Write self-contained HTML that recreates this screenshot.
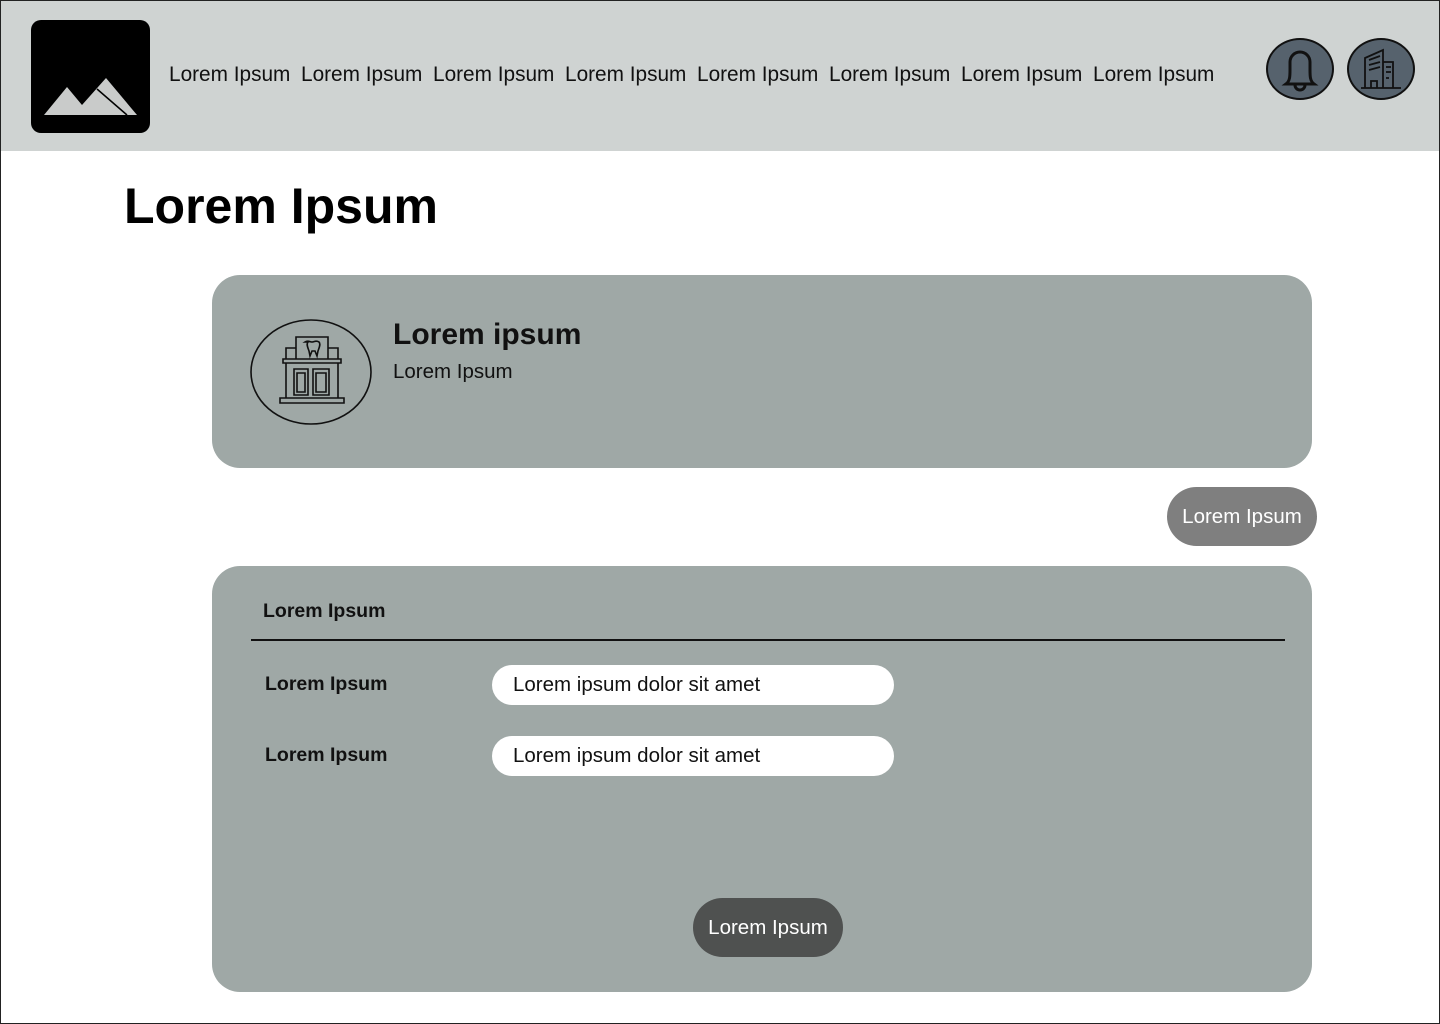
<!DOCTYPE html>
<html><head><style>
*{margin:0;padding:0;box-sizing:border-box}
body{width:1440px;height:1024px;position:relative;background:#fff;font-family:"Liberation Sans",sans-serif;overflow:hidden}
.frame{position:absolute;left:0;top:0;width:1440px;height:1024px;border:1px solid #222;z-index:10;pointer-events:none}
.hdr{position:absolute;left:0;top:0;width:1440px;height:151px;background:#cfd3d2}
.abs{position:absolute}
.nav{position:absolute;top:63px;left:169px;font-size:20.8px;color:#111;white-space:nowrap}
.nav span{display:inline-block;width:132px}
.circ{position:absolute;width:68px;height:62px;border-radius:50%;background:#56626d;border:2px solid #111}
.card{position:absolute;background:#9fa8a6;border-radius:28px}
.pill{position:absolute;background:#fff;border-radius:20px;font-size:20.5px;color:#111;padding-left:21px;line-height:40px;width:402px;height:40px}
.lbl{position:absolute;font-size:19.5px;font-weight:bold;color:#111}
</style></head><body>
<div class="hdr"></div>
<div class="abs" style="left:31px;top:20px;width:119px;height:113px;background:#000;border-radius:10px"></div>
<svg class="abs" style="left:31px;top:20px" width="119" height="113"><polygon points="13,95 36,67 51,85 75,58 106,95" fill="#c9cbca"/><line x1="66" y1="69" x2="96" y2="95" stroke="#000" stroke-width="1.5"/></svg>
<div class="nav"><span>Lorem Ipsum</span><span>Lorem Ipsum</span><span>Lorem Ipsum</span><span>Lorem Ipsum</span><span>Lorem Ipsum</span><span>Lorem Ipsum</span><span>Lorem Ipsum</span><span>Lorem Ipsum</span></div>
<div class="circ" style="left:1266px;top:38px"></div>
<svg class="abs" style="left:1266px;top:38px" width="68" height="62" fill="none" stroke="#111" stroke-width="3"><path d="M20 46 c4-3 4-8 4-14 V24 a10 10 0 0 1 20 0 V32 c0 6 0 11 4 14 Z"/><path d="M29 47 a5 5 0 0 0 10 0"/></svg>
<div class="circ" style="left:1347px;top:38px"></div>
<svg class="abs" style="left:1347px;top:38px" width="68" height="62" fill="none" stroke="#111" stroke-width="1.8"><path d="M18 50 V20 L36 12 V50 M36 24 H46 V50 M22 22 L33 18 M22 27 L33 24 M22 32 L33 29 M39 29 H44 M39 34 H44 M39 40 H42 M14 50 H54 M24 50 V43 H30 V50"/></svg>
<div class="abs" style="left:124px;top:177px;font-size:50px;font-weight:bold;color:#000">Lorem Ipsum</div>
<div class="card" style="left:212px;top:275px;width:1100px;height:193px"></div>
<svg class="abs" style="left:250px;top:319px" width="123" height="106" fill="none" stroke="#111" stroke-width="1.6"><ellipse cx="61" cy="53" rx="60" ry="52"/><path d="M30 84 H94 V79 H30 Z M36 79 V44 H88 V79 M33 44 H91 V40 H33 Z M46 40 V18 H78 V40 M36 40 V29 H46 M78 29 H88 V40 M44 50 H58 V76 H44 Z M63 50 H79 V76 H63 Z M47 54 H55 V73 H47 Z M66 54 H76 V73 H66 Z M55 23 c3-2 5 0 7 0 c2 0 4-2 7 0 c2 2 0 6-1 9 l-1 5 -2 -5 -3 0 -2 5 -1-5 c-1-3-3-7-1-9z"/></svg>
<div class="abs" style="left:393px;top:318px;font-size:30px;font-weight:bold;color:#111">Lorem ipsum</div>
<div class="abs" style="left:393px;top:360px;font-size:20.5px;color:#111">Lorem Ipsum</div>
<div class="abs" style="left:1167px;top:487px;width:150px;height:59px;border-radius:30px;background:#7f7f7f;color:#fff;font-size:20.5px;text-align:center;line-height:59px">Lorem Ipsum</div>
<div class="card" style="left:212px;top:566px;width:1100px;height:426px"></div>
<div class="lbl" style="left:263px;top:600px">Lorem Ipsum</div>
<div class="abs" style="left:251px;top:639px;width:1034px;height:2px;background:#111"></div>
<div class="lbl" style="left:265px;top:673px">Lorem Ipsum</div>
<div class="pill" style="left:492px;top:665px">Lorem ipsum dolor sit amet</div>
<div class="lbl" style="left:265px;top:744px">Lorem Ipsum</div>
<div class="pill" style="left:492px;top:736px">Lorem ipsum dolor sit amet</div>
<div class="abs" style="left:693px;top:898px;width:150px;height:59px;border-radius:30px;background:#4f5150;color:#fff;font-size:20.5px;text-align:center;line-height:59px">Lorem Ipsum</div>
<div class="frame"></div>
</body></html>
